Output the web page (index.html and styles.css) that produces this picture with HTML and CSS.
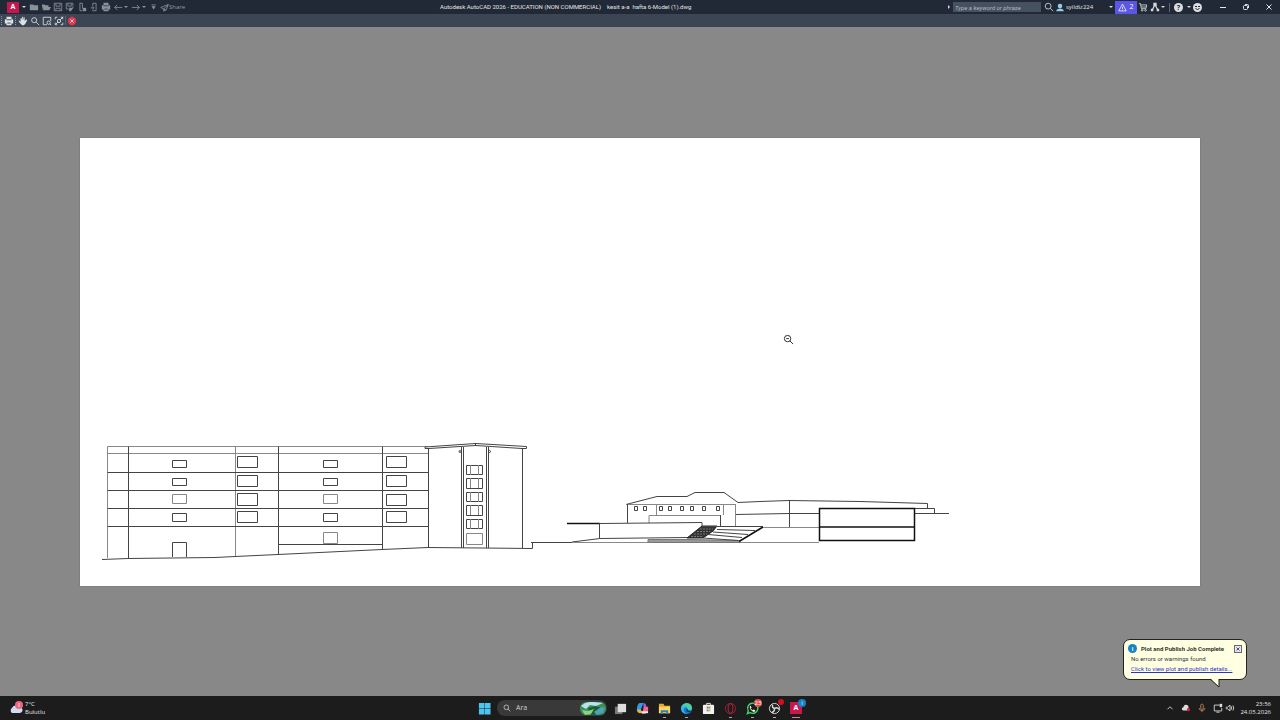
FILE: index.html
```html
<!DOCTYPE html>
<html lang="en">
<head>
    <meta charset="UTF-8">
    <meta name="viewport" content="width=device-width, initial-scale=1.0">
    <title>Autodesk AutoCAD 2026 - Plot Preview</title>
    <link rel="stylesheet" href="styles.css">
</head>
<body>
    <header class="titlebar">
        <div class="quick-access">
            <button class="app-logo" aria-label="Application menu">A</button>
            <span class="caret"></span>
            <button class="tool" aria-label="New"><svg viewBox="0 0 12 12"><path class="fill" d="M1 3h4l1 1h5v6H1z"/></svg></button>
            <button class="tool" aria-label="Open"><svg viewBox="0 0 12 12"><path class="fill" d="M1 3h3l1 1h4v2H4L2 9zM4 6h8l-2 4H2z"/></svg></button>
            <button class="tool" aria-label="Save"><svg viewBox="0 0 12 12"><path d="M1.500 1.500h9v9h-9zM3.500 2v3h5V2M3.500 10V7.500h5V10"/></svg></button>
            <button class="tool" aria-label="Save as"><svg viewBox="0 0 12 12"><path d="M1.500 1.500h8v4M1.500 1.500v7h3M3.500 2v3h4V2M6 10l4-4"/><path class="fill" d="M5 7h5l-3 4H5z"/></svg></button>
            <button class="tool" aria-label="Open from web"><svg viewBox="0 0 12 12"><path d="M3.500 1v9.500h3M3.500 1.500h3V8"/><path class="fill" d="M7 7h4v4H7z"/></svg></button>
            <button class="tool" aria-label="Save to web"><svg viewBox="0 0 12 12"><path d="M4.500 5V1.500h4v9h-4V9M2 7h4M4.500 5.500L6 7 4.500 8.500"/></svg></button>
            <button class="tool" aria-label="Plot"><svg viewBox="0 0 12 12"><path class="fill" d="M3 1h6v3h2v5H9v2H3V9H1V4h2z"/><path class="cut" d="M3 4.500h6M4 8.500h4"/></svg></button>
            <button class="tool" aria-label="Undo"><svg viewBox="0 0 12 12"><path d="M11 6.500H2M5 3.500l-3 3 3 3"/></svg></button>
            <span class="caret dim"></span>
            <button class="tool" aria-label="Redo"><svg viewBox="0 0 12 12"><path d="M1 6.500h9M7 3.500l3 3-3 3"/></svg></button>
            <span class="caret dim"></span>
            <button class="tool" aria-label="Customize"><svg viewBox="0 0 12 12"><path d="M3 3.500h5"/><path class="fill" d="M3 5h5L5.500 9z"/></svg></button>
            <button class="share"><svg viewBox="0 0 12 12"><path d="M1 6l10-4-3 8-3-2zM5 8l6-6M5 8v3l2-2"/></svg>Share</button>
        </div>
        <div class="title">
            <span>Autodesk AutoCAD 2026 - EDUCATION (NON COMMERCIAL)</span>
            <span>kesit a-a&nbsp; hafta 6-Model (1).dwg</span>
        </div>
        <div class="info-center">
            <span class="arrow-right"></span>
            <input class="keyword" type="text" placeholder="Type a keyword or phrase" aria-label="Search help">
            <button class="tool bright" aria-label="Search"><svg viewBox="0 0 12 12"><circle cx="5" cy="5" r="3.500"/><path d="M7.500 7.500L11 11"/></svg></button>
            <button class="account"><svg viewBox="0 0 12 12"><circle cx="6" cy="4" r="3"/><path d="M1 11c0-5 10-5 10 0z"/></svg>syildiz224</button>
            <span class="caret"></span>
            <button class="alerts"><svg viewBox="0 0 12 12"><path d="M6 1.500l5 9H1zM6 5v3M6 9v1"/></svg>2</button>
            <button class="tool bright" aria-label="Store"><svg viewBox="0 0 12 12"><path d="M1 2h2l1 6h5.500l1-4.500H3.500M4 6h6"/><circle cx="5" cy="10" r="1"/><circle cx="9" cy="10" r="1"/></svg></button>
            <button class="tool bright" aria-label="Autodesk apps"><svg viewBox="0 0 12 12"><path stroke-width="1.500" d="M6 3L3 9M6 3l3 6"/><path class="fill" d="M4 1h4v4H4zM1 8h3v3H1zM8 8h3v3H8z"/></svg></button>
            <span class="caret"></span>
            <span class="divider"></span>
            <button class="round" aria-label="Help">?</button>
            <span class="caret"></span>
            <button class="round" aria-label="Feedback"><svg viewBox="0 0 9 9"><path d="M2 3.500h2M5 3.500h2M2.500 5.500q2 2 4 0"/></svg></button>
            <div class="window-buttons">
                <button aria-label="Minimize"><svg viewBox="0 0 8 8"><path d="M1 4.500h6"/></svg></button>
                <button aria-label="Restore"><svg viewBox="0 0 8 8"><rect x="1.500" y="2.500" width="4" height="4" rx="1"/><path d="M3 1.500h2.500q1 0 1 1V5"/></svg></button>
                <button aria-label="Close"><svg viewBox="0 0 8 8"><path d="M1.500 1.500l5 5M6.500 1.500l-5 5"/></svg></button>
            </div>
        </div>
    </header>

    <nav class="preview-bar">
        <span class="grip"></span>
        <button aria-label="Plot"><svg viewBox="0 0 12 12"><path class="fill" d="M3 1h6v3h2v5H9v2H3V9H1V4h2z"/><path class="cut" d="M3 4.500h6M4 8.500h4"/></svg></button>
        <span class="grip"></span>
        <button aria-label="Pan"><svg viewBox="0 0 12 12"><path class="fill" d="M3 7V3l1-1 1 3V1h1v4l1-4 1 1v4l2-2 1 1-2 4-2 2H5L1 7V5z"/></svg></button>
        <button aria-label="Zoom"><svg viewBox="0 0 12 12"><circle cx="5" cy="5" r="3"/><path d="M7.500 7.500L11 11"/></svg></button>
        <button aria-label="Zoom window"><svg viewBox="0 0 12 12"><path d="M6 10.500H1.500v-9h9V6"/><circle cx="8" cy="8" r="2"/><path d="M9.500 9.500L11 11"/></svg></button>
        <button aria-label="Zoom original"><svg viewBox="0 0 12 12"><path d="M1.500 4V1.500H4M8 1.500h2.500V4M1.500 8v2.500H4M8 10.500h2.500V8"/><circle cx="6" cy="6" r="2"/><path d="M2 10l3-3M7 5l4-4"/></svg></button>
        <span class="divider"></span>
        <button aria-label="Close preview"><svg viewBox="0 0 12 12"><circle class="red" cx="6" cy="6" r="5"/><path d="M4 4l4 4M8 4l-4 4"/></svg></button>
    </nav>

    <main class="preview">
        <div class="paper">
            <!-- drawing units are shared with the sheet: 1120 x 448, origin at 80,138 -->
            <svg class="drawing" viewBox="80 138 1120 448" role="img" aria-label="Section drawing">
                <!-- main block -->
                <path class="thin" d="M107.500 446.500H428M107.500 453.500H428M107.500 446.500V558M235.500 446.500V556"/>
                <path d="M128.500 446.500V558M278.500 446.500V554M382.500 446.500V549M428.500 448V547"/>
                <path d="M107.500 472.500H428M107.500 490.500H428M107.500 508.500H428M107.500 526.500H428M278.500 544.500H382"/>
                <path d="M102 559.500L128 558.500 215 557.500 235 556.500 278 554.500 382 549.500 428 547.500L532.500 548.500V542"/>
                <g class="windows">
                    <path d="M172.500 460.500h14v7h-14zM172.500 478.500h14v7h-14zM172.500 513.500h14v8h-14zM172.500 557V542.500h14V557"/>
                    <path class="thin" d="M172.500 494.500h14v9h-14zM323.500 494.500h14v9h-14z"/>
                    <path d="M323.500 460.500h14v7h-14zM323.500 478.500h14v7h-14zM323.500 513.500h14v8h-14z"/>
                    <path class="thin" d="M323.500 532.500h14v11h-14z"/>
                    <path d="M237.500 456.500h20v11h-20zM237.500 475.500h20v11h-20zM237.500 493.500h20v12h-20zM237.500 511.500h20v11h-20z"/>
                    <path d="M386.500 456.500h20v11h-20zM386.500 475.500h20v11h-20zM386.500 494.500h20v11h-20zM386.500 511.500h20v11h-20z"/>
                </g>
                <!-- stair tower -->
                <path d="M425 448.500V447L475.500 443.500 526.500 446.500V448.500H522L475.500 445.500 429 448.500H425M475.500 443V446"/>
                <path d="M461.500 447V548M463.500 447V548M486.500 447V548M488.500 447V548M522.500 449V548"/>
                <circle cx="460" cy="451.500" r="1"/>
                <circle cx="489.500" cy="451.500" r="1"/>
                <path d="M466.500 465.500h16v9h-16zM466.500 478.500h16v10h-16zM466.500 492.500h16v9h-16zM466.500 505.500h16v10h-16zM466.500 519.500h16v9h-16z"/>
                <path class="thin" d="M470.500 465v10M478.500 465v10M470.500 478v10M478.500 478v10M470.500 492v10M478.500 492v10M470.500 505v10M478.500 505v10M470.500 519v10M478.500 519v10"/>
                <path class="thin" d="M466.500 533.500h16v11h-16z"/>
                <!-- old house -->
                <path d="M626 504.500L657 496.500H687L695 492.500H724L738 502.500 760 501.500 789 500.500"/>
                <path class="thin" d="M626 504.500H736M656.500 504V515M723.500 504V515M735.500 504V526M649 523V515.500H720"/>
                <path d="M627.500 504V523M720.500 515V527M736 514.500L789 513.500H819"/>
                <path d="M634.500 506.500h3v4h-3zM643.500 506.500h3v4h-3zM659.500 506.500h3v4h-3zM668.500 506.500h3v4h-3zM680.500 506.500h3v4h-3zM690.500 506.500h3v4h-3zM702.500 506.500h3v4h-3zM716.500 506.500h3v4h-3z"/>
                <!-- terrace and stairs -->
                <path class="bold" d="M567 523.500H600"/>
                <path d="M600 523.500L702 522.500V526M599.500 523V538M572 542L600 538.500 687 537.500"/>
                <path d="M531 542.500H572"/>
                <path class="thin" d="M572 542.500H819"/>
                <path class="slab" d="M648 539.500H690L740 540.500V542.500H648z"/>
                <path class="steps" d="M702 526H717L713 531 703 538H687z"/>
                <path class="tread" d="M700 529h13M697 531.500h13M694 534h13M691 536.500h12"/>
                <path d="M702 526.500H763M717 529.500L755 530.500M713 532L748 534.500M708 534.500L742 537.500M703 538L738 540.500"/>
                <path class="bold" d="M763 527L739 541.500"/>
                <path class="thin" d="M763 527.500H819"/>
                <!-- right hall -->
                <path d="M789.500 500V527"/>
                <path d="M789 500.500L860 501.500 927.500 503.500V508.500M915 508.500H934.500V513.500M915 513.500H949"/>
                <path class="bold" d="M819.500 508.500h95v32h-95zM819.500 527H914.500"/>
            </svg>
        </div>

        <svg class="cursor" viewBox="0 0 12 12"><circle cx="5" cy="5" r="3.500"/><path d="M7.500 7.500L11 11M3.500 5h3"/></svg>

        <aside class="balloon">
            <div class="balloon-head">
                <span class="info">i</span>
                <strong>Plot and Publish Job Complete</strong>
                <button class="balloon-close" aria-label="Close"><svg viewBox="0 0 8 8"><path d="M2 2l4 4M6 2L2 6"/></svg></button>
            </div>
            <p>No errors or warnings found</p>
            <a href="#">Click to view plot and publish details...</a>
            <svg class="tail" viewBox="0 0 12 10"><path class="tail-fill" d="M0 0L9 9V0z"/><path d="M0 1L9 9V1"/></svg>
        </aside>
    </main>

    <footer class="taskbar">
        <button class="weather">
            <svg viewBox="0 0 14 14"><path class="cloud" d="M3 12a3 3 0 0 1 0-5 4 4 0 0 1 7-1 3 3 0 0 1 1 6z"/><circle class="alert" cx="10" cy="4" r="4"/><path d="M10 2v4"/></svg>
            <span>7°C<br>Bulutlu</span>
        </button>

        <div class="apps">
            <button class="app" aria-label="Start"><svg viewBox="0 0 14 14"><path fill="#4cc5f3" d="M1 1h6v6H1zM7.500 1h6v6h-6zM1 7.500h6v6H1zM7.500 7.500h6v6h-6z"/></svg></button>
            <label class="search">
                <svg class="lens" viewBox="0 0 12 12"><circle cx="5" cy="5" r="3.500"/><path d="M7.500 7.500L11 11"/></svg>
                <input type="text" placeholder="Ara" aria-label="Ara">
                <svg class="picture" viewBox="0 0 26 13">
                    <rect width="26" height="13" rx="6" fill="#3c8f5a"/>
                    <path fill="#b7e3ea" d="M1 4Q6-1 14 0l9 1-7 3-6-1-4 4z"/>
                    <path fill="#1c5b36" d="M8 6l8-2 8 3-3 5-10 1z"/>
                    <path fill="#8bd083" d="M2 8l6 1 6-2-3 5-6 1z"/>
                    <path fill="#4ba3b5" d="M14 10l7-5 4 1-2 5-6 2z"/>
                </svg>
            </label>
            <button class="app" aria-label="Task view"><svg viewBox="0 0 14 14"><rect x="1" y="5" width="8" height="8" fill="#777"/><rect x="4" y="2" width="9" height="9" fill="#ddd"/></svg></button>
            <button class="app" aria-label="Copilot"><svg viewBox="0 0 14 14"><path fill="#2b9be8" d="M4 1h4L5 9H1q0-7 3-8z"/><path fill="#a85be0" d="M8 1q3 0 3 4l2 1-2 3H8z"/><path fill="#e8b33a" d="M1 8h4l2 3-2 1Q1 12 1 8z"/><path fill="#ef6a8b" d="M9 5h4q1 7-4 8H6z"/><path fill="#eee" d="M6 10h7v2H6z"/></svg></button>
            <button class="app running" aria-label="File Explorer"><svg viewBox="0 0 14 14"><path fill="#e9a820" d="M1 2h5l1 2h6v8H1z"/><path fill="#ffd75e" d="M1 5h12v7H1z"/><path fill="#2c7cc9" d="M3 9h8v4H9v-2H5v2H3z"/></svg></button>
            <button class="app running" aria-label="Edge"><svg viewBox="0 0 14 14"><circle cx="7" cy="7" r="6" fill="#1779c9"/><path fill="#4ad0a3" d="M1 6q2-5 7-5 5 1 5 6 0 2-3 2-2 0-2-2-1-3-7-1z"/><path fill="#35b6e8" d="M1 6q5-4 7 0-3-1-4 2 0 4 4 5Q1 13 1 6z"/><path fill="#12365c" d="M8 7q0 3 4 3-2 2-5 0-1-2 1-3z"/></svg></button>
            <button class="app" aria-label="Store"><svg viewBox="0 0 14 14"><path fill="none" stroke="#eee" d="M5 3V1.500h4V3"/><rect x="1" y="3" width="12" height="10" rx="1" fill="#f2f2f2"/><path fill="#e0563c" d="M5 5h2v2H5z"/><path fill="#6bab3a" d="M7 5h2v2H7z"/><path fill="#3a9bdc" d="M5 8h2v2H5z"/><path fill="#e0aa30" d="M7 8h2v2H7z"/></svg></button>
            <button class="app running" aria-label="Opera GX"><svg viewBox="0 0 14 14"><circle cx="7" cy="7" r="5.500" fill="none" stroke="#a31c38"/><ellipse cx="7" cy="7" rx="2.500" ry="5" fill="none" stroke="#c4213f"/></svg></button>
            <button class="app running" aria-label="WhatsApp"><svg viewBox="0 0 14 14"><path fill="#1d1d1d" stroke="#3ddc68" stroke-width="1.500" d="M1.500 12.500l1-3a5.500 5.500 0 1 1 2 2z"/><path fill="#eee" d="M5 4l1 2-1 1 2 2 1-1 2 1-1 2Q4 9 4 5z"/></svg><span class="count">23</span></button>
            <button class="app running" aria-label="OBS"><svg viewBox="0 0 14 14"><circle cx="7" cy="7" r="5.500" fill="#222" stroke="#ddd"/><path fill="none" stroke="#ddd" stroke-width="1.500" d="M7 7Q4 6 5 3M7 7q3-2 5 1M7 7q0 4-3 4"/></svg><span class="dot"></span></button>
            <button class="app active" aria-label="AutoCAD"><span class="acad">A</span><span class="count blue">i</span></button>
        </div>

        <div class="tray">
            <button aria-label="Hidden icons"><svg viewBox="0 0 12 12"><path d="M3 7.500L6 4.500l3 3"/></svg></button>
            <button aria-label="Cloud"><svg viewBox="0 0 12 12"><path class="light" d="M3 9a2 2 0 0 1 0-4 3 3 0 0 1 6 0v4z"/><circle class="rose" cx="9" cy="8" r="2"/></svg></button>
            <button aria-label="Microphone"><svg class="mic" viewBox="0 0 12 12"><rect x="4.500" y="1.500" width="3" height="6" rx="1"/><path d="M2.500 6q0 3 3.500 3t3.500-3M6 9v2"/></svg></button>
            <button class="network" aria-label="Network and volume">
                <svg viewBox="0 0 12 12"><path d="M8 2.500H1.500v7h9V6M4 11h4"/><path class="light" d="M8 1h3v4H8z"/></svg>
                <svg viewBox="0 0 12 12"><path d="M1.500 5h1.500l3-2.500v7L3 7H1.500zM7.500 4q1 2 0 4M9.500 3q2 3 0 6"/></svg>
            </button>
            <time class="clock">23:56<br>24.05.2026</time>
        </div>
    </footer>
</body>
</html>
```
FILE: styles.css
```css
* {
    box-sizing: border-box;
}
body {
    margin: 0;
    height: 100vh;
    display: flex;
    flex-direction: column;
    overflow: hidden;
    font-family: "Open Sans", "Noto Sans", sans-serif;
    font-size: 7px;
    line-height: 8px;
    color: #e4e6ea;
    background-color: #888;
}
button,
input {
    font: inherit;
    color: inherit;
    background: none;
    border: none;
    padding: 0;
    margin: 0;
}
svg {
    display: block;
    flex: none;
    fill: none;
    stroke: currentColor;
}
.fill {
    fill: currentColor;
    stroke: none;
}
.cut {
    stroke: #333a47;
}

/* title bar */
.titlebar {
    flex: none;
    height: 14px;
    display: grid;
    grid-template-columns: 440px 1fr auto;
    align-items: center;
    background-color: #212936;
}
.quick-access,
.info-center,
.window-buttons {
    display: flex;
    align-items: center;
}
.quick-access {
    padding-left: 7px;
}
.app-logo {
    width: 12px;
    height: 11px;
    margin-right: 3px;
    font-weight: bold;
    line-height: 10px;
    color: #fff;
    background-color: #c2184b;
}
.caret {
    flex: none;
    width: 4px;
    height: 2px;
    margin-right: 2px;
    background-color: #d5d8dd;
    clip-path: polygon(0 0, 100% 0, 50% 100%);
}
.dim {
    background-color: #8b919b;
}
.tool {
    flex: none;
    width: 12px;
    color: #8b919b;
}
.tool svg {
    width: 10px;
    height: 10px;
    margin: 0 auto;
}
.bright {
    color: #d5d8dd;
}
.share {
    display: flex;
    align-items: center;
    font-size: 6px;
    color: #969ba5;
}
.share svg {
    width: 9px;
    height: 9px;
}
.title {
    display: flex;
    gap: 6px;
    white-space: nowrap;
    font-family: Roboto, sans-serif;
    font-size: 6px;
}
.arrow-right {
    width: 2px;
    height: 4px;
    margin-right: 3px;
    background-color: #d5d8dd;
    clip-path: polygon(0 0, 100% 50%, 0 100%);
}
.keyword {
    width: 88px;
    height: 10px;
    padding: 0 2px;
    margin-right: 2px;
    font-family: Roboto, sans-serif;
    font-size: 6px;
    font-style: italic;
    background-color: #465160;
}
.keyword::placeholder {
    color: #b3b9c2;
}
.account {
    display: flex;
    align-items: center;
    gap: 1px;
    width: 54px;
    font-size: 6px;
}
.account svg {
    width: 10px;
    height: 9px;
    fill: #9ccbe9;
    stroke: none;
}
.alerts {
    display: flex;
    align-items: center;
    justify-content: center;
    gap: 2px;
    width: 22px;
    height: 13px;
    color: #fff;
    background-color: #5b56e6;
}
.alerts svg {
    width: 9px;
    height: 9px;
}
.divider {
    width: 1px;
    height: 9px;
    margin: 0 4px 0 2px;
    background-color: #5b6370;
}
.round {
    width: 9px;
    height: 9px;
    margin-right: 4px;
    border-radius: 50%;
    line-height: 9px;
    font-weight: bold;
    color: #212936;
    background-color: #dcdee2;
}
.window-buttons {
    margin-left: 5px;
}
.window-buttons button {
    width: 23px;
}
.window-buttons svg {
    width: 8px;
    height: 8px;
    margin: 0 auto;
}

/* plot preview toolbar */
.preview-bar {
    flex: none;
    height: 13px;
    display: flex;
    align-items: center;
    padding-left: 1px;
    color: #dfe3e8;
    background-color: #3b4554;
}
.preview-bar button {
    width: 12px;
}
.preview-bar svg {
    width: 10px;
    height: 10px;
    margin: 0 auto;
}
.preview-bar .divider {
    margin: 0;
}
.grip {
    width: 2px;
    height: 9px;
    border-left: 1px dotted #8d96a3;
}
.red {
    fill: #e0364f;
    stroke: none;
}

/* sheet */
.preview {
    position: relative;
    flex: 1;
    min-height: 0;
    display: flex;
    align-items: center;
    justify-content: center;
    padding-top: 1px;
    background-color: #888;
}
.paper {
    width: 87.5%;
    background-color: #fff;
    box-shadow: 0 0 1px #555;
}
.drawing {
    width: 100%;
    stroke: #444;
}
.drawing .thin {
    stroke: #888;
}
.drawing .bold {
    stroke: #111;
    stroke-width: 1.5;
}
.drawing .slab {
    fill: #999;
    stroke: #777;
}
.drawing .steps {
    fill: #333;
    stroke: #222;
}
.drawing .tread {
    stroke: #777;
    stroke-dasharray: 2 1;
}
.cursor {
    position: absolute;
    left: 783px;
    top: 307px;
    width: 11px;
    height: 11px;
    stroke: #222;
}

/* notification balloon */
.balloon {
    position: absolute;
    right: 33px;
    bottom: 16px;
    width: 124px;
    height: 41px;
    padding: 4px 4px 4px 7px;
    border: 1px solid #222;
    border-radius: 7px;
    font-family: Roboto, sans-serif;
    font-size: 6px;
    color: #333;
    background-color: #ffffe1;
    white-space: nowrap;
}
.balloon-head {
    display: flex;
    align-items: center;
    gap: 4px;
    margin-left: -3px;
}
.balloon p {
    margin: 2px 0;
}
.balloon a {
    display: block;
    color: #2b32d0;
}
.info {
    width: 9px;
    height: 9px;
    border-radius: 50%;
    text-align: center;
    font-weight: bold;
    line-height: 9px;
    color: #fff;
    background-color: #1583c5;
}
.balloon-close {
    width: 8px;
    height: 8px;
    margin-left: auto;
    border: 1px solid #667;
    color: #223;
    background-color: #e6e8ee;
}
.balloon-close svg {
    width: 6px;
    height: 6px;
}
.tail {
    position: absolute;
    right: 24px;
    top: 38px;
    width: 12px;
    height: 10px;
    stroke: #222;
}
.tail-fill {
    fill: #ffffe1;
    stroke: none;
}

/* taskbar */
.taskbar {
    flex: none;
    height: 24px;
    display: grid;
    grid-template-columns: 1fr auto 1fr;
    align-items: center;
    background-color: #1c1c1c;
}
.weather {
    display: flex;
    align-items: center;
    gap: 2px;
    padding-left: 9px;
    text-align: left;
    font-size: 6px;
}
.weather svg {
    width: 14px;
    height: 14px;
}
.weather .cloud {
    fill: #cfdcf5;
    stroke: none;
}
.weather .alert {
    fill: #f0647a;
    stroke: none;
}
.apps {
    display: flex;
    align-items: center;
}
.app {
    position: relative;
    width: 22px;
    height: 24px;
}
.app svg {
    width: 13px;
    height: 13px;
    margin: 0 auto;
    stroke: none;
}
.running::after,
.active::after {
    content: "";
    position: absolute;
    left: 10px;
    bottom: 2px;
    width: 3px;
    height: 1px;
    background-color: #aaa;
}
.active::after {
    left: 7px;
    width: 8px;
    background-color: #e0808c;
}
.search {
    display: flex;
    align-items: center;
    width: 110px;
    height: 16px;
    margin: 0 2px;
    padding: 0 1px 0 6px;
    border-radius: 8px;
    background-color: #393939;
}
.search input {
    flex: 1;
    min-width: 0;
    padding-left: 5px;
}
.search input::placeholder {
    color: #d0d0d0;
}
.lens {
    width: 8px;
    height: 8px;
}
.picture {
    width: 26px;
    height: 13px;
    stroke: none;
}
.count,
.dot {
    position: absolute;
    top: 3px;
    right: 1px;
    min-width: 8px;
    height: 8px;
    border-radius: 4px;
    font-size: 6px;
    line-height: 8px;
    color: #fff;
    background-color: #d9534f;
}
.dot {
    min-width: 6px;
    height: 6px;
    background-color: #d0121f;
}
.blue {
    background-color: #1583c5;
}
.acad {
    display: block;
    width: 12px;
    height: 12px;
    margin: 0 auto;
    font-weight: bold;
    line-height: 12px;
    color: #fff;
    background-color: #c9184e;
}
.tray {
    display: flex;
    align-items: center;
    justify-content: flex-end;
    gap: 4px;
    padding-right: 9px;
}
.tray svg {
    width: 12px;
    height: 10px;
}
.network {
    display: flex;
}
.light {
    fill: #ddd;
    stroke: none;
}
.rose {
    fill: #d81b45;
    stroke: none;
}
.mic {
    stroke: #c98a5c;
}
.clock {
    text-align: right;
    font-size: 6px;
}
```
